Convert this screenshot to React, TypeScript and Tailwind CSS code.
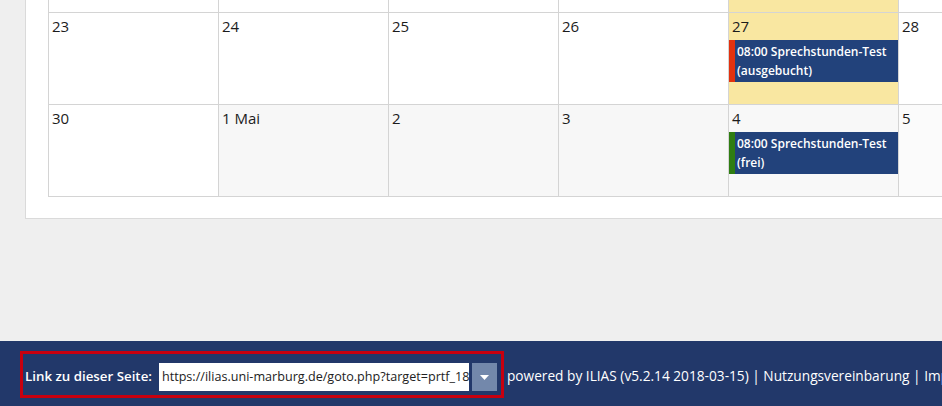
import React from "react";

type Ev = { label: string; state: string; bar: string };
type Day = { n: string; bg?: string; ev?: Ev };

const font = { fontFamily: '"Open Sans", "Noto Sans", Arial, sans-serif' };

const rows: Day[][] = [
  [{ n: "" }, { n: "" }, { n: "" }, { n: "" }, { n: "", bg: "bg-[#f9e7a1]" }, { n: "" }],
  [
    { n: "23" },
    { n: "24" },
    { n: "25" },
    { n: "26" },
    {
      n: "27",
      bg: "bg-[#f9e7a1]",
      ev: { label: "08:00 Sprechstunden-Test", state: "(ausgebucht)", bar: "bg-[#e2320e]" },
    },
    { n: "28" },
  ],
  [
    { n: "30" },
    { n: "1 Mai", bg: "bg-[#f7f7f7]" },
    { n: "2", bg: "bg-[#f7f7f7]" },
    { n: "3", bg: "bg-[#f7f7f7]" },
    {
      n: "4",
      bg: "bg-[#f8f8f8]",
      ev: { label: "08:00 Sprechstunden-Test", state: "(frei)", bar: "bg-[#2f7d12]" },
    },
    { n: "5", bg: "bg-[#fbfbfb]" },
  ],
];

function Cell({ d, top }: { d: Day; top: boolean }) {
  return (
    <div
      className={`w-[170px] shrink-0 border-b border-l border-[#d4d4d4] ${d.bg ?? "bg-white"} ${
        top ? "h-[13px]" : "h-[92px]"
      }`}
    >
      {!top && (
        <div>
          <div className="h-[27px] pl-[3px] pt-[3px] text-[15px] leading-[21px] text-[#1c1c1c]">{d.n}</div>
          {d.ev && (
            <div className="flex bg-[#22427b]">
              <div className={`w-[6px] shrink-0 ${d.ev.bar}`} />
              <div className="py-[2px] pl-[2px] text-[12px] font-semibold leading-[19px] text-white">
                <div>{d.ev.label}</div>
                <div>{d.ev.state}</div>
              </div>
            </div>
          )}
        </div>
      )}
    </div>
  );
}

export default function App() {
  return (
    <div className="flex h-[406px] w-[942px] flex-col overflow-hidden bg-[#efefef]" style={font}>
      <div className="h-[341px] shrink-0">
        <div className="ml-[25px] border-b border-l border-[#dadada] bg-white pb-[21px] pl-[22px]">
          <div className="flex flex-col">
            {rows.map((r, i) => (
              <div key={i} className="flex">
                {r.map((d, j) => (
                  <Cell key={j} d={d} top={i === 0} />
                ))}
              </div>
            ))}
          </div>
        </div>
      </div>
      <div className="flex flex-1 items-start overflow-hidden whitespace-nowrap bg-[#22386a] pt-[10px] pl-[20px]">
        <div className="flex h-[47px] shrink-0 items-center border-[3px] border-[#c8000f] pl-[2px] pr-[4px] pt-[5px]">
          <span className="mr-[7px] text-[13.3px] font-semibold text-white">Link zu dieser Seite:</span>
          <div className="flex h-[28px] w-[310px] items-center overflow-hidden bg-white pl-[3px] text-[12.6px] text-[#222]">
            https://ilias.uni-marburg.de/goto.php?target=prtf_18
          </div>
          <div className="ml-[3px] flex h-[28px] w-[25px] items-center justify-center bg-[#7388ab]">
            <svg width="9" height="5" viewBox="0 0 9 5">
              <path d="M0 0 L9 0 L4.5 5 Z" fill="#fff" />
            </svg>
          </div>
        </div>
        <div className="ml-[3px] mt-[15px] text-[13.7px] font-medium text-white">
          powered by ILIAS (v5.2.14 2018-03-15) | Nutzungsvereinbarung | Impressum
        </div>
      </div>
    </div>
  );
}
